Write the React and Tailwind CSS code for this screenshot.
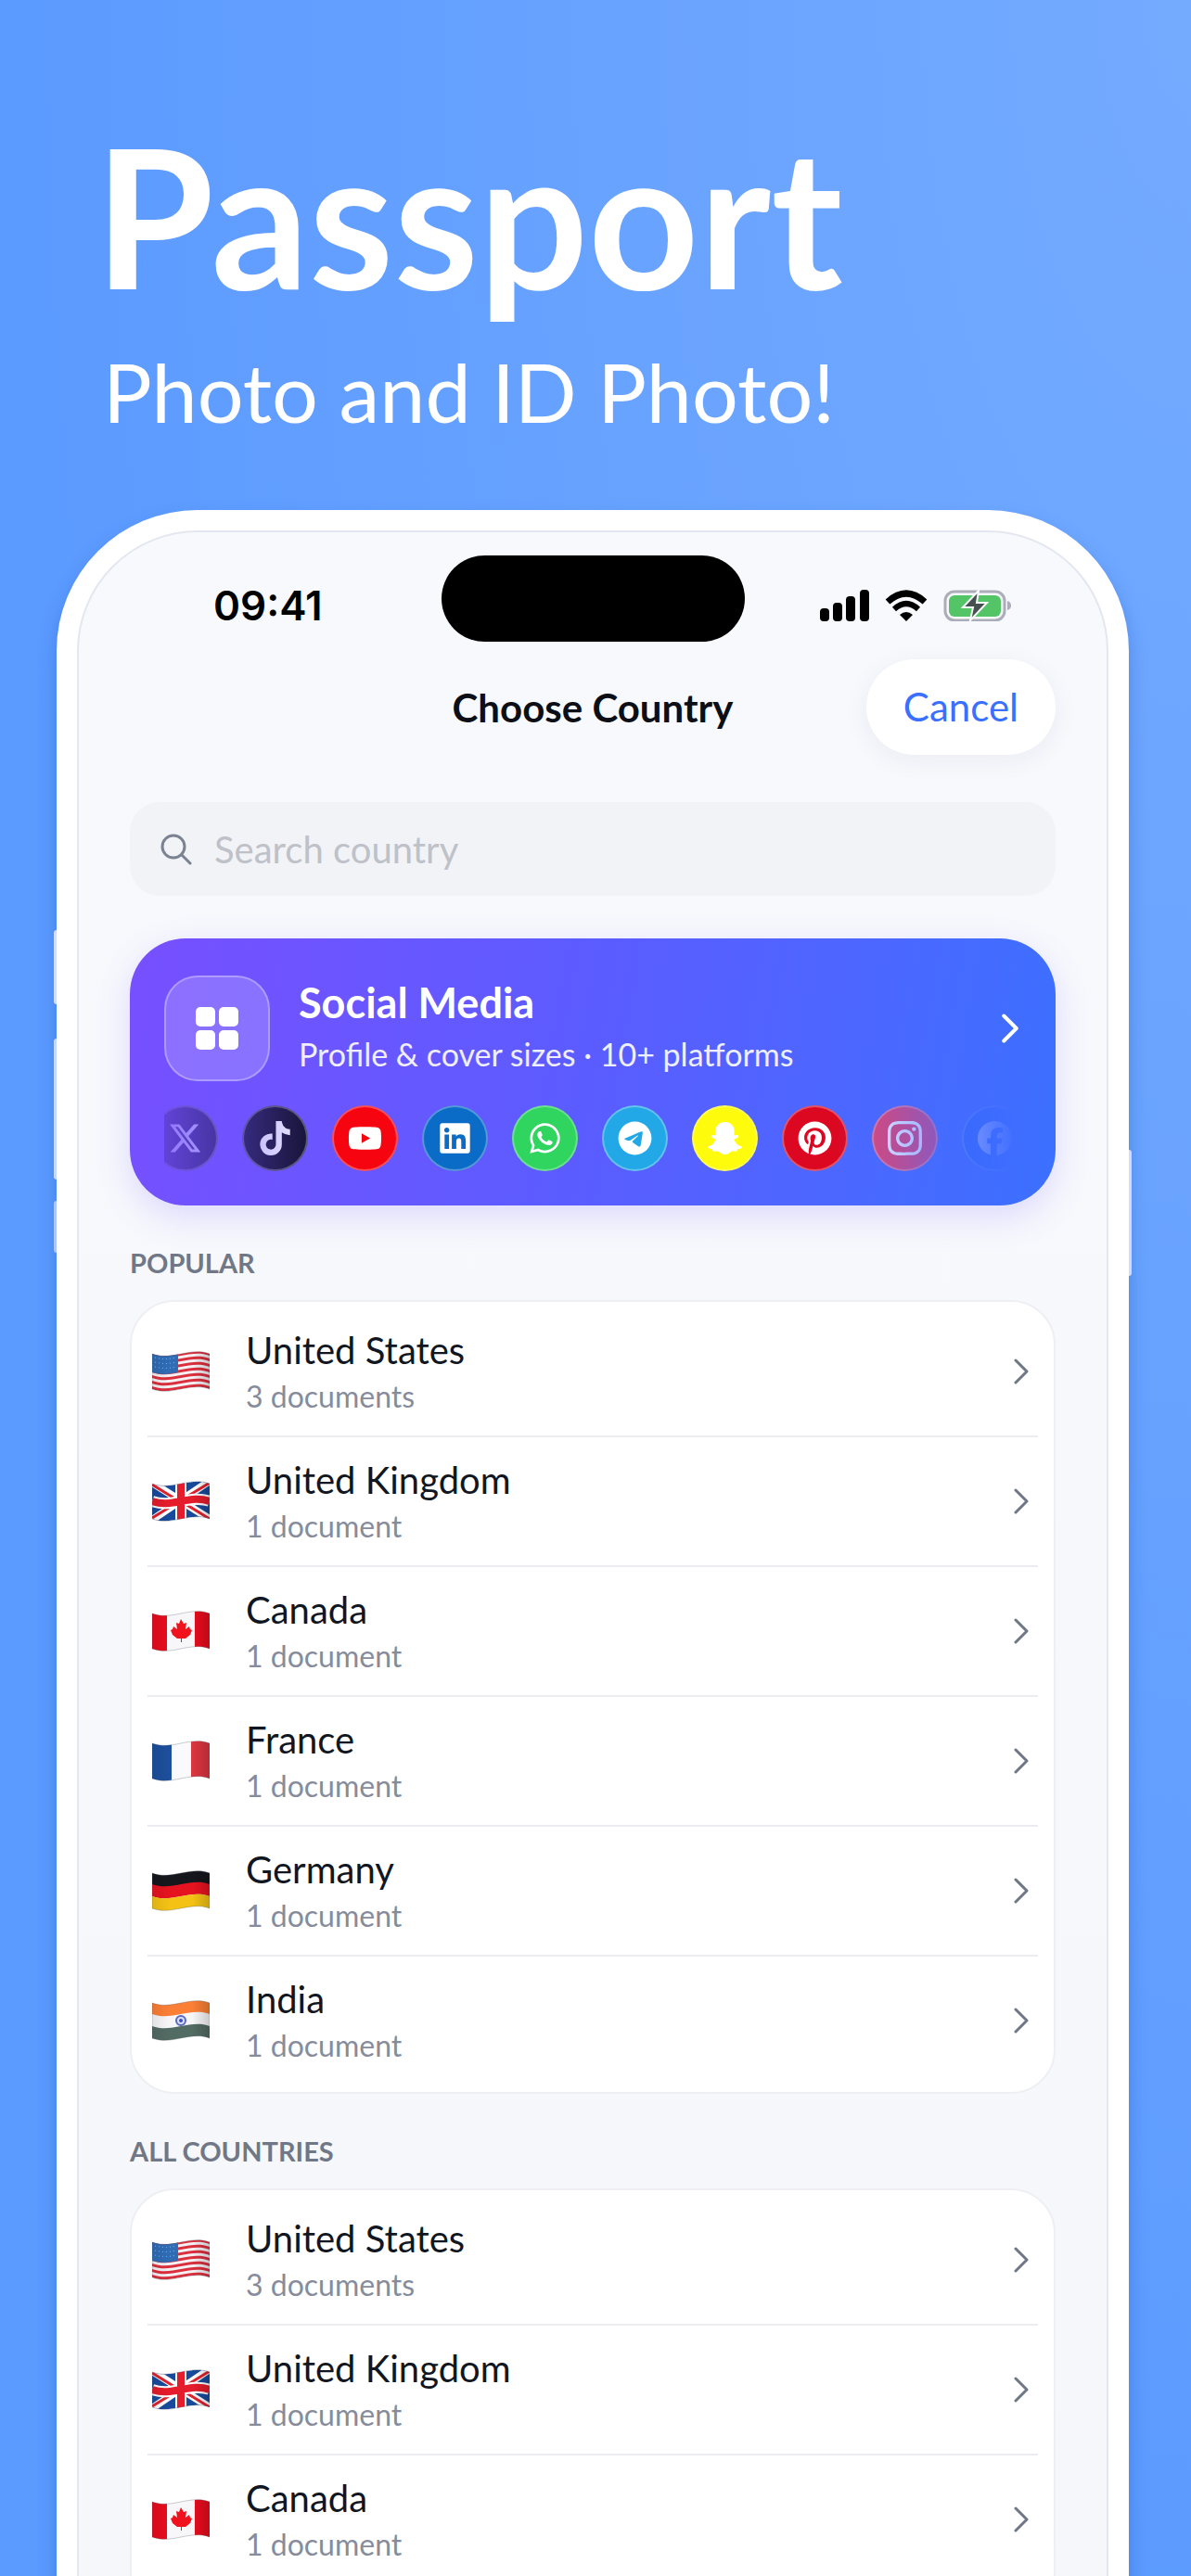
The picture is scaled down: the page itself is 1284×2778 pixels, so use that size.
import { useId, useState } from 'react'
import { FaSnapchatGhost } from 'react-icons/fa'
import {
  FaXTwitter,
  FaTiktok,
  FaYoutube,
  FaLinkedin,
  FaWhatsapp,
  FaTelegram,
  FaPinterest,
} from 'react-icons/fa6'
import { SiInstagram, SiFacebook } from 'react-icons/si'

const platforms = [
  { name: 'X', Icon: FaXTwitter, color: 'bg-black/80' },
  { name: 'TikTok', Icon: FaTiktok, color: 'bg-[#0c0c1c]' },
  { name: 'YouTube', Icon: FaYoutube, color: 'bg-[#f60410]' },
  { name: 'LinkedIn', Icon: FaLinkedin, color: 'bg-[#0a6cc6]' },
  { name: 'WhatsApp', Icon: FaWhatsapp, color: 'bg-[#30d55f]' },
  { name: 'Telegram', Icon: FaTelegram, color: 'bg-[#22a8e6]' },
  { name: 'Snapchat', Icon: FaSnapchatGhost, color: 'bg-[#fffb0c]' },
  { name: 'Pinterest', Icon: FaPinterest, color: 'bg-[#dc0822]' },
  { name: 'Instagram', Icon: SiInstagram, color: 'bg-[#ee4264]' },
  { name: 'Facebook', Icon: SiFacebook, color: 'bg-[#1f66f4]' },
]

const countries = [
  { code: 'us', name: 'United States', documents: 3 },
  { code: 'gb', name: 'United Kingdom', documents: 1 },
  { code: 'ca', name: 'Canada', documents: 1 },
  { code: 'fr', name: 'France', documents: 1 },
  { code: 'de', name: 'Germany', documents: 1 },
  { code: 'in', name: 'India', documents: 1 },
]

// a horizontal band that follows the wave of the cloth
function Band({ y, h, fill }) {
  return (
    <path
      d={`M0 ${y + 3}c11 4 21 2 31 0s21-4 31 0v${h}c-10-4-21-2-31 0s-20 4-31 0z`}
      fill={fill}
    />
  )
}

function UnitedStates() {
  return (
    <>
      <Band y={0} h={38} fill="#f4f1f4" />
      {[0, 1, 2, 3, 4, 5, 6].map((i) => (
        <Band key={i} y={i * 6 - 1} h={3} fill="#dc2f3d" />
      ))}
      <path d="M0 2c10 4 18 3 28 1v20c-10 2-18 3-28 0z" fill="#2f6cb4" />
      {[7, 12, 17].map((y) => (
        <path key={y} d={`M3 ${y}c8 2 14 2 23 0`} stroke="#8fb4dd" strokeWidth="1" strokeDasharray="1 3" fill="none" />
      ))}
    </>
  )
}

function UnitedKingdom() {
  return (
    <>
      <Band y={0} h={38} fill="#184a9c" />
      <path d="M0 2 62 41M0 42 62 0" stroke="#fff" strokeWidth="8" />
      <path d="M0 4 26 20M36 25 62 41M0 40 26 24M36 18 62 2" stroke="#e0222f" strokeWidth="3" />
      <path d="M0 22c11 4 21 2 31 0s21-4 31 0M31 0v44" stroke="#fff" strokeWidth="12" fill="none" />
      <path d="M0 22c11 4 21 2 31 0s21-4 31 0M31 0v44" stroke="#e51c2b" strokeWidth="8" fill="none" />
    </>
  )
}

function Canada() {
  return (
    <>
      <Band y={0} h={38} fill="#f7f7f9" />
      <path d="M0 0h16v44H0zM46 0h16v44H46z" fill="#e80c1d" />
      <path
        d="m31 9 3 5 3-1-1 7 4-3 1 3 2 1-2 5-5 4-4 0 0 4h-1v-4l-4 0-5-4-2-5 2-1 1-3 4 3-1-7 3 1z"
        fill="#f0121c"
      />
    </>
  )
}

function France() {
  return (
    <>
      <Band y={0} h={38} fill="#fafafc" />
      <path d="M0 0h21v44H0z" fill="#1c4f9c" />
      <path d="M42 0h20v44H42z" fill="#dc3640" />
    </>
  )
}

function Germany() {
  return (
    <>
      <Band y={-1} h={14} fill="#15171c" />
      <Band y={12} h={13} fill="#e5131f" />
      <Band y={25} h={14} fill="#f3c214" />
    </>
  )
}

function India() {
  return (
    <>
      <Band y={-1} h={14} fill="#fb7f35" />
      <Band y={12} h={13} fill="#f6f6f8" />
      <Band y={25} h={14} fill="#526b63" />
      <circle cx="31" cy="22" r="5" fill="#d9defa" stroke="#5b68c0" strokeWidth="2" />
      <circle cx="31" cy="22" r="2" fill="#3b50c4" />
    </>
  )
}

const flags = { us: UnitedStates, gb: UnitedKingdom, ca: Canada, fr: France, de: Germany, in: India }

function Flag({ code }) {
  const id = useId()
  const Design = flags[code]
  return (
    <svg viewBox="0 0 62 44" className="w-[62px] shrink-0" aria-hidden="true">
      <defs>
        <clipPath id={`${id}-cloth`}>
          <path d="M0 3c11 4 21 2 31 0s21-4 31 0v38c-10-4-21-2-31 0s-20 4-31 0z" />
        </clipPath>
        <linearGradient id={`${id}-shade`}>
          <stop offset="0" stopOpacity=".08" />
          <stop offset=".3" stopOpacity="0" />
          <stop offset=".7" stopOpacity="0" />
          <stop offset="1" stopOpacity=".18" />
        </linearGradient>
      </defs>
      <g clipPath={`url(#${id}-cloth)`}>
        <Design />
        <path d="M0 0h62v44H0z" fill={`url(#${id}-shade)`} />
      </g>
      <path
        d="M0 3c11 4 21 2 31 0s21-4 31 0v38c-10-4-21-2-31 0s-20 4-31 0z"
        fill="none"
        stroke="#4b5563"
        strokeOpacity=".3"
      />
    </svg>
  )
}

function Chevron({ className }) {
  return (
    <svg viewBox="0 0 16 28" fill="none" stroke="currentColor" strokeLinecap="round" strokeLinejoin="round" className={className} aria-hidden="true">
      <path d="m2 2 12 12L2 26" />
    </svg>
  )
}

function StatusIcons() {
  return (
    <div className="flex items-center gap-[17px]">
      <svg viewBox="0 0 53 34" className="h-[34px] w-[53px]" aria-label="Signal">
        <rect x="0" y="20" width="10" height="14" rx="4" />
        <rect x="14" y="14" width="10" height="20" rx="4" />
        <rect x="28" y="7" width="10" height="27" rx="4" />
        <rect x="43" y="0" width="10" height="34" rx="4" />
      </svg>
      <svg viewBox="0 0 46 34" className="h-[34px] w-[46px]" aria-label="Wi-Fi">
        <path d="M3 13Q23-5 43 13" fill="none" stroke="#000" strokeWidth="7" />
        <path d="M10 21Q23 9 36 21" fill="none" stroke="#000" strokeWidth="6" />
        <path d="M16 27q7-6 14 0l-7 7z" />
      </svg>
      <svg viewBox="0 0 74 34" className="h-[34px] w-[74px]" aria-label="Battery charging">
        <rect x="2" y="2" width="64" height="31" rx="10" fill="none" stroke="#abaeb8" strokeWidth="3" />
        <rect x="6" y="6" width="56" height="23" rx="6" fill="#54c566" />
        <path d="M69 12q4 1 4 5t-4 5z" fill="#abaeb8" />
        <path d="M38 1 21 19h11l-3 14 18-19H36z" fill="#46504f" stroke="#f9fafe" strokeWidth="2" />
      </svg>
    </div>
  )
}

function CountryList({ title, items, className = 'pb-[6px]' }) {
  return (
    <section>
      <h2 className="mt-[44px] mb-[22px] text-[29px] leading-9 font-bold text-[#707887]">{title}</h2>
      <ul className={`rounded-[48px] border-2 border-[#eeeff3] bg-white px-[17px] pt-[6px] ${className}`}>
        {items.map((country) => (
          <li key={country.code} className="border-b-2 border-[#ebecef] last:border-b-transparent">
            <button type="button" className="flex h-[138px] w-full items-center pr-[10px] pl-[5px] text-left">
              <Flag code={country.code} />
              <span className="ml-[39px] flex-1 pt-[3px]">
                <span className="block text-[40px] leading-[50px] text-[#111722]">{country.name}</span>
                <span className="block text-[32px] leading-[50px] text-[#868c9b]">
                  {country.documents} document{country.documents > 1 ? 's' : ''}
                </span>
              </span>
              <Chevron className="h-[28px] w-[16px] stroke-3 text-[#6f7685]" />
            </button>
          </li>
        ))}
      </ul>
    </section>
  )
}

export default function App() {
  const [query, setQuery] = useState('')

  return (
    <main className="h-screen overflow-hidden bg-[radial-gradient(100%_105%_at_top_right,#74abff,#5b9aff)] font-['Lato',sans-serif]">
      <header className="pt-[110px] pl-[102px] text-white">
        <h1 className="text-[208px] leading-[244px] font-bold">Passport</h1>
        <p className="mt-[12px] pl-[9px] text-[88px] leading-[112px]">Photo and ID Photo!</p>
      </header>

      <div className="relative mt-[72px] mr-[67px] ml-[61px] rounded-t-[152px] bg-white px-[22px] pt-[22px] shadow-[0_12px_20px_rgba(30,90,190,0.4)]">
        <span className="absolute top-[453px] -left-[3px] h-[80px] w-[3px] rounded-l bg-[#cfdcff]" />
        <span className="absolute top-[570px] -left-[3px] h-[152px] w-[3px] rounded-l bg-[#c4d7ff]" />
        <span className="absolute top-[745px] -left-[3px] h-[56px] w-[3px] rounded-l bg-[#a9c6ff]" />
        <span className="absolute top-[690px] -right-[3px] h-[136px] w-[3px] rounded-r bg-[#cfdcff]" />

        <div className="rounded-t-[130px] border-2 border-[#e3e7ef] bg-linear-to-b from-[#f8f9fd] to-[#f6f7fb] px-[55px] pt-[25px]">
          <div className="grid h-[93px] grid-cols-[1fr_327px_1fr] items-center">
            <time className="mt-[14px] pl-[90px] font-['Inter'] text-[44px] leading-[48px] font-semibold text-black">
              09:41
            </time>
            <div className="h-full rounded-full bg-black" />
            <div className="mt-[14px] justify-self-end pr-[47px]">
              <StatusIcons />
            </div>
          </div>

          <div className="mt-[19px] grid grid-cols-[1fr_auto_1fr] items-center">
            <h2 className="col-start-2 text-[42px] leading-[48px] font-bold text-[#0d0f16]">Choose Country</h2>
            <button
              type="button"
              className="h-[103px] justify-self-end rounded-full bg-white px-[40px] text-[42px] text-[#3a70ff] shadow-[0_6px_28px_rgba(20,30,60,0.06)]"
            >
              Cancel
            </button>
          </div>

          <div className="mt-[51px] flex h-[101px] items-center gap-[24px] rounded-[32px] bg-[#f2f3f6] px-[33px]">
            <svg viewBox="0 0 34 34" fill="none" stroke="#7b8291" strokeWidth="3" strokeLinecap="round" className="w-[34px]" aria-hidden="true">
              <circle cx="14" cy="14" r="12" />
              <path d="m23 23 9 9" />
            </svg>
            <input
              type="search"
              aria-label="Search country"
              value={query}
              onChange={(e) => setQuery(e.target.value)}
              placeholder="Search country"
              className="min-w-0 flex-1 bg-transparent text-[40px] leading-[50px] outline-none placeholder:text-[#bfc1c8]"
            />
          </div>

          <button
            type="button"
            className="mt-[46px] block w-full rounded-[60px] bg-linear-100 from-[#774fff] via-[#5a5cff] to-[#3b70ff] px-[37px] pt-[40px] pb-[37px] text-left text-white shadow-[0_12px_36px_rgba(100,80,255,0.18)]"
          >
            <span className="flex items-center">
              <span className="grid size-[114px] place-items-center rounded-[36px] border-2 border-white/30 bg-white/18">
                <span className="grid grid-cols-2 gap-[4px]">
                  <span className="size-[21px] rounded-[5px] bg-white" />
                  <span className="size-[21px] rounded-[5px] bg-white" />
                  <span className="size-[21px] rounded-[5px] bg-white" />
                  <span className="size-[21px] rounded-[5px] bg-white" />
                </span>
              </span>
              <span className="ml-[31px] flex-1">
                <span className="block text-[45px] leading-[56px] font-bold">Social Media</span>
                <span className="block text-[34px] leading-[56px] text-white/90">
                  Profile &amp; cover sizes · 10+ platforms
                </span>
              </span>
              <Chevron className="mr-[3px] h-[32px] w-[18px] stroke-[3.5]" />
            </span>
            <span className="mt-[26px] mr-[7px] flex justify-center gap-[26px] overflow-hidden mask-[linear-gradient(to_right,rgba(0,0,0,0.2),black_20%,black_79%,transparent)]">
              {platforms.map(({ name, Icon, color }) => (
                <span
                  key={name}
                  className={`grid size-[71px] shrink-0 place-items-center rounded-full border-2 border-white/30 ${color}`}
                >
                  <Icon size={37} title={name} />
                </span>
              ))}
            </span>
          </button>

          <CountryList title="POPULAR" items={countries} />
          {/* the last list runs on below the fold */}
          <CountryList title="ALL COUNTRIES" items={countries.slice(0, 3)} className="pb-[140px]" />
        </div>
      </div>
    </main>
  )
}
